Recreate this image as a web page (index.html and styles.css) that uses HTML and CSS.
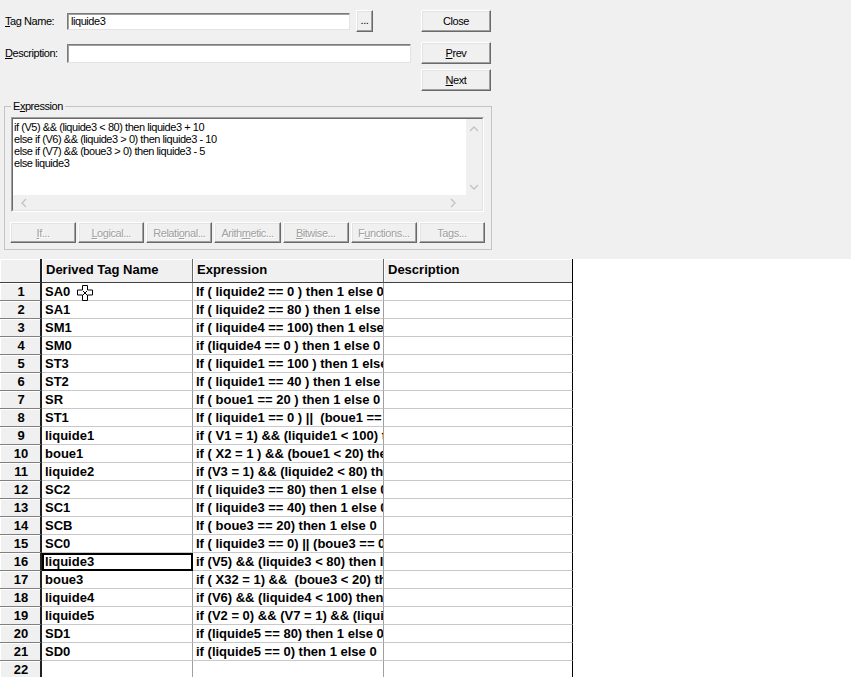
FILE: index.html
```html
<!DOCTYPE html>
<html>
<head>
<meta charset="utf-8">
<link rel="stylesheet" href="styles.css">
</head>
<body>
<div class="dialog">
  <div class="top">
    <div class="fields">
      <div class="frow">
        <span class="lbl"><u>T</u>ag Name:</span>
        <div class="input w1">liquide3</div>
        <div class="btn dots">...</div>
      </div>
      <div class="frow r2">
        <span class="lbl"><u>D</u>escription:</span>
        <div class="input w2"></div>
      </div>
    </div>
    <div class="btncol">
      <div class="btn">Close</div>
      <div class="btn prev"><u>P</u>rev</div>
      <div class="btn next"><u>N</u>ext</div>
    </div>
  </div>
  <fieldset class="group">
    <legend>E<u>x</u>pression</legend>
    <div class="editor">
      <div class="editor-in">
        <div class="edit-main">
          <div class="edit-text">
            <div>if (V5) &amp;&amp; (liquide3 &lt; 80) then liquide3 + 10</div>
            <div>else if (V6) &amp;&amp; (liquide3 &gt; 0) then liquide3 - 10</div>
            <div>else if (V7) &amp;&amp; (boue3 &gt; 0) then liquide3 - 5</div>
            <div>else liquide3</div>
          </div>
          <div class="vscroll">
            <svg width="16" height="16" viewBox="0 0 16 16"><path d="M4 10 L8 6 L12 10" fill="none" stroke="#c2c2c2" stroke-width="1.3"/></svg>
            <svg width="16" height="16" viewBox="0 0 16 16"><path d="M4 6 L8 10 L12 6" fill="none" stroke="#c2c2c2" stroke-width="1.3"/></svg>
          </div>
        </div>
        <div class="hscroll">
          <svg width="16" height="16" viewBox="0 0 16 16"><path d="M10 4 L6 8 L10 12" fill="none" stroke="#c2c2c2" stroke-width="1.3"/></svg>
          <svg width="16" height="16" viewBox="0 0 16 16"><path d="M6 4 L10 8 L6 12" fill="none" stroke="#c2c2c2" stroke-width="1.3"/></svg>
          <div class="corner"></div>
        </div>
      </div>
    </div>
    <div class="ops">
      <div class="btn dis"><u>I</u>f...</div>
      <div class="btn dis"><u>L</u>ogical...</div>
      <div class="btn dis">Relati<u>o</u>nal...</div>
      <div class="btn dis">Arith<u>m</u>etic...</div>
      <div class="btn dis"><u>B</u>itwise...</div>
      <div class="btn dis">F<u>u</u>nctions...</div>
      <div class="btn dis">Ta<u>g</u>s...</div>
    </div>
  </fieldset>
</div>

<div class="grid">
  <div class="hc corner-h"></div>
  <div class="hc">Derived Tag Name</div>
  <div class="hc">Expression</div>
  <div class="hc last">Description</div>

  <div class="rh">1</div><div class="c name has-cursor">SA0<svg class="cursor" width="18" height="18" viewBox="0 0 18 18"><path d="M6.5 1.5 H11.5 V6 H16.5 V11 H11.5 V16.5 H6.5 V11 H1.5 V6 H6.5 Z" fill="#fff" stroke="#000" stroke-width="1" stroke-linejoin="round"/><path d="M7 7 L11 11 M11 7 L7 11" stroke="#000" stroke-width="1"/></svg></div><div class="c">If ( liquide2 == 0 ) then 1 else 0</div><div class="c last"></div>
  <div class="rh">2</div><div class="c name">SA1</div><div class="c">If ( liquide2 == 80 ) then 1 else 0</div><div class="c last"></div>
  <div class="rh">3</div><div class="c name">SM1</div><div class="c">if ( liquide4 == 100) then 1 else 0</div><div class="c last"></div>
  <div class="rh">4</div><div class="c name">SM0</div><div class="c">if (liquide4 == 0 ) then 1 else 0</div><div class="c last"></div>
  <div class="rh">5</div><div class="c name">ST3</div><div class="c">If ( liquide1 == 100 ) then 1 else 0</div><div class="c last"></div>
  <div class="rh">6</div><div class="c name">ST2</div><div class="c">If ( liquide1 == 40 ) then 1 else 0</div><div class="c last"></div>
  <div class="rh">7</div><div class="c name">SR</div><div class="c">If ( boue1 == 20 ) then 1 else 0</div><div class="c last"></div>
  <div class="rh">8</div><div class="c name">ST1</div><div class="c">If ( liquide1 == 0 ) ||&nbsp; (boue1 == 0)</div><div class="c last"></div>
  <div class="rh">9</div><div class="c name">liquide1</div><div class="c">if ( V1 = 1) &amp;&amp; (liquide1 &lt; 100) then</div><div class="c last"></div>
  <div class="rh">10</div><div class="c name">boue1</div><div class="c">if ( X2 = 1 ) &amp;&amp; (boue1 &lt; 20) then</div><div class="c last"></div>
  <div class="rh">11</div><div class="c name">liquide2</div><div class="c">if (V3 = 1) &amp;&amp; (liquide2 &lt; 80) then</div><div class="c last"></div>
  <div class="rh">12</div><div class="c name">SC2</div><div class="c">If ( liquide3 == 80) then 1 else 0</div><div class="c last"></div>
  <div class="rh">13</div><div class="c name">SC1</div><div class="c">If ( liquide3 == 40) then 1 else 0</div><div class="c last"></div>
  <div class="rh">14</div><div class="c name">SCB</div><div class="c">If ( boue3 == 20) then 1 else 0</div><div class="c last"></div>
  <div class="rh">15</div><div class="c name">SC0</div><div class="c">If ( liquide3 == 0) || (boue3 == 0)</div><div class="c last"></div>
  <div class="rh">16</div><div class="c name sel">liquide3</div><div class="c">if (V5) &amp;&amp; (liquide3 &lt; 80) then liquide3</div><div class="c last"></div>
  <div class="rh">17</div><div class="c name">boue3</div><div class="c">if ( X32 = 1) &amp;&amp;&nbsp; (boue3 &lt; 20) then</div><div class="c last"></div>
  <div class="rh">18</div><div class="c name">liquide4</div><div class="c">if (V6) &amp;&amp; (liquide4 &lt; 100) then</div><div class="c last"></div>
  <div class="rh">19</div><div class="c name">liquide5</div><div class="c">if (V2 = 0) &amp;&amp; (V7 = 1) &amp;&amp; (liquide5</div><div class="c last"></div>
  <div class="rh">20</div><div class="c name">SD1</div><div class="c">if (liquide5 == 80) then 1 else 0</div><div class="c last"></div>
  <div class="rh">21</div><div class="c name">SD0</div><div class="c">if (liquide5 == 0) then 1 else 0</div><div class="c last"></div>
  <div class="rh">22</div><div class="c name"></div><div class="c"></div><div class="c last"></div>
</div>
</body>
</html>
```

FILE: styles.css
```css
html, body {
  margin: 0;
  padding: 0;
  background: #fff;
  overflow: hidden;
}
body {
  width: 851px;
  height: 677px;
  font-family: "Liberation Sans", Arial, sans-serif;
  font-size: 11px;
  letter-spacing: -0.45px;
  color: #000;
}
u { text-decoration: underline; text-underline-offset: 1px; }

.dialog {
  height: 259px;
  background: #f0f0f0;
  padding-top: 10px;
  box-sizing: border-box;
  overflow: hidden;
}
.top {
  display: flex;
  padding-left: 5px;
}
.fields { width: 416px; }
.frow {
  display: flex;
  align-items: center;
  height: 22px;
}
.frow.r2 { margin-top: 10px; }
.lbl { width: 62px; white-space: nowrap; }
.input {
  box-sizing: border-box;
  background: #fff;
  border: 1px solid;
  border-color: #7a7a7a #e3e3e3 #e3e3e3 #7a7a7a;
  box-shadow: inset 1px 1px #a0a0a0;
  padding: 1px 3px 0;
  line-height: 13px;
}
.w1 { width: 283px; height: 17px; }
.w2 { width: 344px; height: 19px; }

.btn {
  box-sizing: border-box;
  height: 22px;
  background: #f0f0f0;
  display: flex;
  align-items: center;
  justify-content: center;
  white-space: nowrap;
  border: 1px solid;
  border-color: #fff #696969 #696969 #fff;
  box-shadow: inset -1px -1px #a0a0a0, inset 1px 1px #e3e3e3;
}
.dots { width: 17px; margin-left: 6px; padding-bottom: 3px; }
.btncol {
  width: 70px;
  display: flex;
  flex-direction: column;
}
.btncol .prev { margin-top: 10px; }
.btncol .next { margin-top: 5px; }

.group {
  margin: 9px 0 0 4px;
  width: 487px;
  box-sizing: border-box;
  border: 1px solid #c4c4c4;
  padding: 5px 6px 6px 6px;
}
.group legend {
  padding: 0 2px;
  line-height: 12px;
}
.editor {
  width: 473px;
  height: 95px;
  box-sizing: border-box;
  border: 1px solid;
  border-color: #a0a0a0 #fff #fff #a0a0a0;
}
.editor-in {
  height: 100%;
  box-sizing: border-box;
  border: 1px solid;
  border-color: #696969 #e3e3e3 #e3e3e3 #696969;
  display: flex;
  flex-direction: column;
  background: #fff;
}
.edit-main {
  flex: 1;
  display: flex;
}
.edit-text {
  flex: 1;
  padding: 2px 0 0 1px;
  line-height: 12px;
  white-space: nowrap;
}
.vscroll {
  width: 16px;
  background: #f0f0f0;
  display: flex;
  flex-direction: column;
  justify-content: space-between;
  padding: 2px 0 0;
}
.hscroll {
  height: 15px;
  background: #f0f0f0;
  display: flex;
  align-items: center;
}
.hscroll svg:first-child { margin-left: 3px; }
.hscroll svg:nth-child(2) { margin-left: auto; margin-right: 5px; }
.corner { width: 16px; height: 15px; background: #f0f0f0; }

.ops {
  margin: 10px 0 0 -1px;
  width: 475px;
  display: grid;
  grid-template-columns: repeat(7, 1fr);
  gap: 2px;
}
.ops .btn { height: 21px; }
.dis { color: #a0a0a0; text-shadow: 1px 1px #fff; }

.grid {
  display: grid;
  grid-template-columns: 42px 151px 191px 189px;
  grid-template-rows: 24px;
  grid-auto-rows: 18px;
  width: 574px;
  font-family: "Liberation Sans", Arial, sans-serif;
  font-weight: bold;
  font-size: 13px;
  letter-spacing: 0;
}
.grid > div {
  box-sizing: border-box;
  overflow: hidden;
  white-space: nowrap;
  display: flex;
  align-items: center;
}
.hc {
  background: #f0f0f0;
  border-right: 1px solid #696969;
  border-bottom: 1px solid #404040;
  box-shadow: inset 1px 1px #fff;
  padding-left: 4px;
  padding-bottom: 2px;
}
.hc.corner-h { border-right: 2px solid #202020; }
.grid > .last { border-right: 1px solid #000; }
.rh {
  background: #f0f0f0;
  border-right: 2px solid #202020;
  border-bottom: 1px solid #808080;
  box-shadow: inset 1px 1px #fff;
  justify-content: center;
  padding-left: 2px;
}
.c {
  background: #fff;
  border-right: 1px solid #a0a0a0;
  border-bottom: 1px solid #c8c8c8;
  padding-left: 3px;
}
.c.sel { outline: 2px solid #000; outline-offset: -2px; }
.has-cursor { position: relative; overflow: visible !important; }
.cursor { position: absolute; left: 34px; top: 1px; }
```
